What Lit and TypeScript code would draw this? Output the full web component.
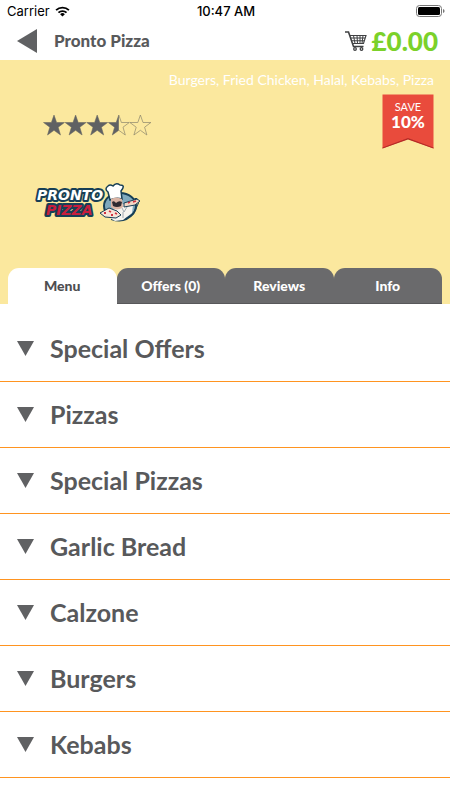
import { LitElement, html, css, svg } from "lit";
import { customElement, property, state } from "lit/decorators.js";

const STAR = "M10.5 0L13.1 7.5H21L14.7 12.2L17 20L10.5 15.3L4 20L6.3 12.2L0 7.5H7.9Z";

@customElement("status-bar")
class StatusBar extends LitElement {
  static styles = css`
    :host {
      display: grid;
      grid-template-columns: 1fr auto 1fr;
      align-items: center;
      height: 22px;
      padding: 0 5px 0 7px;
      font: 400 13px/22px Inter, sans-serif;
      color: #000;
    }
    .carrier { display: flex; align-items: center; gap: 5px; }
    .time { font-weight: 500; }
    .battery { justify-self: end; display: block; }
    svg { display: block; }
  `;
  render() {
    return html`
      <span class="carrier">Carrier
        <svg width="15" height="11" viewBox="0 0 16 12" fill="none" stroke="#000" stroke-width="2">
          <path d="M1 4.6a10 10 0 0 1 14 0M3.6 7.3a6.3 6.3 0 0 1 8.8 0" />
          <path d="M8 11.4L5.4 8.9a3.8 3.8 0 0 1 5.2 0Z" fill="#000" stroke="none" />
        </svg>
      </span>
      <span class="time">10:47 AM</span>
      <svg class="battery" width="29" height="12" viewBox="0 0 29 12">
        <rect x=".5" y=".5" width="25" height="11" rx="3" fill="#fff" stroke="#777" />
        <rect x="2" y="2" width="22" height="8" rx="1.5" />
        <path d="M27 4q1.600 .6 1.600 2t-1.600 2z" fill="#777" />
      </svg>
    `;
  }
}

@customElement("star-rating")
class StarRating extends LitElement {
  @property({ type: Number }) value = 0;
  static styles = css`
    :host { display: flex; }
    svg { display: block; }
  `;
  render() {
    return html`
      <svg width="109" height="22" viewBox="0 0 109 22" role="img" aria-label="${this.value} out of 5 stars">
        <defs>
          <clipPath id="left"><rect width="10.500" height="21" /></clipPath>
        </defs>
        ${[0, 1, 2, 3, 4].map((i) => {
          const fill = this.value - i;
          return svg`<g transform="translate(${0.5 + i * 21.600} 1)">
            <path d=${STAR} fill="none" stroke="#8b856c" stroke-width=".7" />
            ${fill > 0
              ? svg`<path d=${STAR} fill="#606163" clip-path=${fill < 1 ? "url(#left)" : "none"} />`
              : null}
          </g>`;
        })}
      </svg>
    `;
  }
}

@customElement("shop-logo")
class ShopLogo extends LitElement {
  static styles = css`
    :host, svg { display: block; }
    .word {
      font: italic 700 14px "DejaVu Sans", sans-serif;
      stroke: #173f56;
      stroke-width: 4px;
      stroke-linejoin: round;
      paint-order: stroke;
    }
    .top { fill: #fff; }
    .bottom { fill: #c81e3c; }
  `;
  render() {
    return html`
      <svg width="112" height="40" viewBox="0 0 112 40" role="img" aria-label="Pronto Pizza">
        <g transform="translate(-3 0)">
          <ellipse cx="89" cy="24" rx="16" ry="13" fill="#7fa9bd" stroke="#173f56" stroke-width="2" />
          <path d="M80 36q14 5 22-5l5-10-4-5 3 0 2 5-5 11q-9 11-23 6z" fill="#173f56" />
          <path d="M79 36l3-9 8-5 12 1-1 8-9 7-8 1z" fill="#f6f4ef" />
          <path d="M79 18L77 10Q73 7 77 4Q79 2 82 4Q85 0 89 3Q95 3 90 9L91 17Q85 15 79 18Z" fill="#fff" stroke="#173f56" stroke-width="1.500" />
          <path d="M80 17q5-3 11 0l1 8q-6 5-12 0z" fill="#d9b4a5" />
          <path d="M81 20q2-2 4 1q3-3 6-1l-1 4q-4 2-8 0z" fill="#2e2a31" />
          <path d="M93 21l13-4 3 2-5 4-11 2z" fill="#f2d6c5" stroke="#173f56" />
          <path d="M97 21l2-1M102 20l3-1" stroke="#d2323f" stroke-width="1.500" />
          <path d="M69 31l9-5 8 3 4 4-5 3-11-1z" fill="#f7e4d8" stroke="#173f56" />
          <path d="M73 31h2M78 29l2 1M80 33h2M84 31l2 1" stroke="#d2323f" stroke-width="1.800" />
          <path d="M91 26l2 4 3-5M92 30v6" fill="none" stroke="#8d98a3" stroke-width=".8" />
        </g>
        <text class="word bottom" x="12" y="33">PIZZA</text>
        <text class="word top" x="3" y="18">PRONTO</text>
      </svg>
    `;
  }
}

@customElement("app-root")
class AppRoot extends LitElement {
  @state() private tab = "Menu";
  private tabs = ["Menu", "Offers (0)", "Reviews", "Info"];
  private categories = ["Special Offers", "Pizzas", "Special Pizzas", "Garlic Bread", "Calzone", "Burgers", "Kebabs"];

  static styles = css`
    :host {
      display: block;
      min-height: 100vh;
      background: #fff;
      color: #58595b;
      font-family: Lato, sans-serif;
    }
    * { box-sizing: border-box; }
    button { border: 0; background: none; padding: 0; font: inherit; color: inherit; cursor: pointer; }
    svg { display: block; }
    h1, h2, p, ul { margin: 0; padding: 0; font: inherit; }
    .nav { display: flex; align-items: center; height: 38px; padding: 0 12px 0 17px; }
    .title { margin-left: 17px; font-size: 17px; line-height: 24px; font-weight: 900; }
    .basket { display: flex; align-items: center; gap: 4px; margin-left: auto; color: #7bd12a; font-size: 26px; line-height: 36px; font-weight: 900; }
    .hero { display: flex; flex-direction: column; height: 244px; padding: 8px 8px 0; background: #fbe89e; }
    .cuisines { padding-right: 8px; text-align: right; color: #fff; font-size: 14px; line-height: 24px; }
    .info { display: flex; justify-content: space-between; align-items: flex-start; flex: 1; padding: 2px 8px 0 26px; }
    .shop { display: flex; flex-direction: column; gap: 46px; padding-top: 20px; }
    .rating { margin-left: 9px; }
    .ribbon { display: grid; width: 52px; height: 55px; }
    .ribbon > * { grid-area: 1 / 1; }
    .save { position: relative; padding-top: 7px; text-align: center; color: #fff; font-size: 11px; line-height: 12px; }
    .save b { display: block; font-size: 17px; line-height: 18px; font-weight: 900; }
    .tabs { display: flex; }
    .tab { flex: 1 1 0; height: 36px; border-radius: 11px 11px 0 0; background: #6a6a6c; color: #fff; font-size: 14px; line-height: 36px; font-weight: 900; border-bottom: 1px solid #58585a; }
    .tab.active { background: #fff; color: #4d4e50; border-color: #fff; }
    .list { list-style: none; padding-top: 12px; }
    .item { border-bottom: 1px solid #ff9420; }
    .row { display: flex; align-items: center; gap: 16px; width: 100%; height: 65px; padding: 0 17px 1px; text-align: left; font-size: 25px; line-height: 32px; font-weight: 700; }
  `;

  render() {
    return html`
      <status-bar></status-bar>
      <header class="nav">
        <button aria-label="Back">
          <svg width="20" height="24" viewBox="0 0 20 24"><path d="M0 12L20 0V24Z" fill="#606163" /></svg>
        </button>
        <h1 class="title">Pronto Pizza</h1>
        <button class="basket" aria-label="Basket, £0.00">
          <svg width="22" height="20" viewBox="0 0 22 20" fill="none" stroke="#3f4042">
            <path d="M0 1H3.500L8.500 15.500H18.500" stroke-width="1.600" />
            <path d="M4.500 4.500H21L18.500 12.500H7.500M5.500 7H20M6.500 9.700H19.500" stroke-width="1.100" />
            <path d="M8.500 4.500L10 12.500M12 4.500L12.500 12.500M15 4.500V12.500M18 4.500L17 12.500" stroke-width="1" />
            <circle cx="10" cy="18" r="1.300" stroke-width="1.300" />
            <circle cx="16.500" cy="18" r="1.300" stroke-width="1.300" />
          </svg>
          £0.00
        </button>
      </header>
      <section class="hero">
        <p class="cuisines">Burgers, Fried Chicken, Halal, Kebabs, Pizza</p>
        <div class="info">
          <div class="shop">
            <star-rating class="rating" .value=${3.5}></star-rating>
            <shop-logo></shop-logo>
          </div>
          <div class="ribbon">
            <svg width="52" height="55" viewBox="0 0 52 55">
              <path d="M.5 .5H51.500V54.500L26 45L.5 54.500Z" fill="#e94b3c" />
              <path d="M.5 53.500L26 44L51.500 53.500V54.500L26 45.500L.5 54.500Z" fill="#b52b27" />
            </svg>
            <p class="save">SAVE<b>10%</b></p>
          </div>
        </div>
        <div class="tabs" role="tablist">
          ${this.tabs.map(
            (t) => html`<button class="tab ${t === this.tab ? "active" : ""}" role="tab"
              aria-selected=${t === this.tab} @click=${() => (this.tab = t)}>${t}</button>`
          )}
        </div>
      </section>
      <ul class="list">
        ${this.categories.map(
          (c) => html`<li class="item"><button class="row" aria-expanded="false">
            <svg width="17" height="15" viewBox="0 0 17 15"><path d="M0 0H17L8.500 15Z" fill="#606163" /></svg>
            <span>${c}</span>
          </button></li>`
        )}
      </ul>
    `;
  }
}
